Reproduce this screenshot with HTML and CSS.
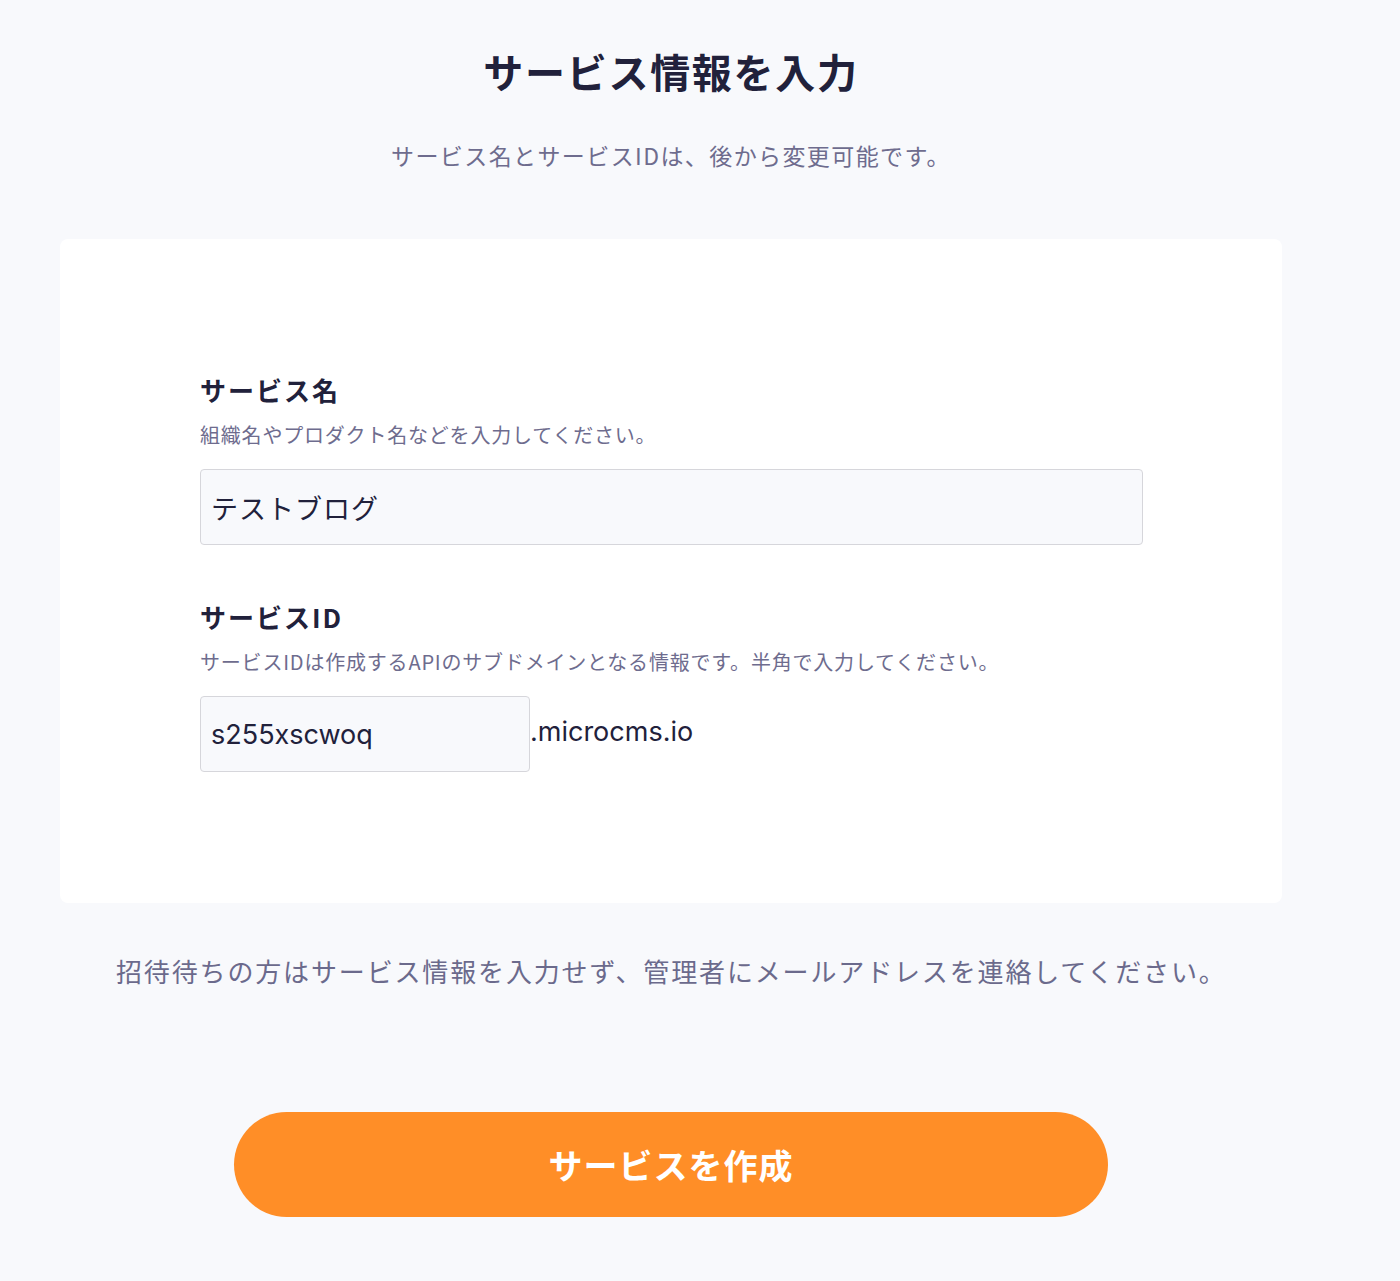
FILE: index.html
```html
<!DOCTYPE html>
<html lang="ja">
<head>
<meta charset="utf-8">
<title>サービス情報を入力</title>
<link rel="stylesheet" href="styles.css">
</head>
<body>
<main class="page">
  <h1 class="title">サービス情報を入力</h1>
  <p class="lead">サービス名とサービスIDは、後から変更可能です。</p>
  <section class="card">
    <div class="field">
      <label class="label">サービス名</label>
      <p class="desc">組織名やプロダクト名などを入力してください。</p>
      <div class="input wide">テストブログ</div>
    </div>
    <div class="field field-id">
      <label class="label">サービスID</label>
      <p class="desc">サービスIDは作成するAPIのサブドメインとなる情報です。半角で入力してください。</p>
      <div class="id-row">
        <div class="input narrow latin">s255xscwoq</div>
        <span class="suffix">.microcms.io</span>
      </div>
    </div>
  </section>
  <p class="note">招待待ちの方はサービス情報を入力せず、管理者にメールアドレスを連絡してください。</p>
  <div class="actions">
    <button class="submit">サービスを作成</button>
  </div>
</main>
</body>
</html>
```
FILE: styles.css
```css
html, body {
  margin: 0;
  padding: 0;
  background: #f8f9fc;
}
body {
  font-family: "Noto Sans CJK JP", "Noto Sans", sans-serif;
  color: #21213b;
}
.page {
  width: 1222px;
  margin-left: 60px;
  padding-top: 44px;
  padding-bottom: 64px;
}
.title {
  margin: 0;
  text-align: center;
  font-size: 40px;
  line-height: 54px;
  font-weight: 700;
  letter-spacing: 1.7px;
  color: #21213b;
}
.lead {
  margin: 42px 0 0;
  text-align: center;
  font-size: 23px;
  line-height: 30px;
  color: #6e6c8e;
  letter-spacing: 1.4px;
}
.card {
  margin-top: 69px;
  background: #ffffff;
  border-radius: 8px;
  padding: 133px 140px 131px;
}
.field-id {
  margin-top: 54px;
}
.label {
  display: block;
  font-size: 26px;
  line-height: 36px;
  font-weight: 700;
  letter-spacing: 2px;
  color: #21213b;
}
.desc {
  margin: 14px 0 0;
  font-size: 20px;
  line-height: 26px;
  color: #6e6c8e;
  letter-spacing: 0.8px;
}
.input {
  box-sizing: border-box;
  height: 76px;
  margin-top: 21px;
  background: #f8f9fc;
  border: 1.5px solid #d6d6db;
  border-radius: 4px;
  padding: 0 10px;
  display: flex;
  align-items: center;
  font-size: 27px;
  letter-spacing: 1px;
  color: #21213b;
}
.wide {
  width: 943px;
}
.id-row {
  display: flex;
  align-items: flex-start;
}
.narrow {
  width: 330px;
  padding: 0 10px;
}
.latin {
  font-family: "Inter", "Liberation Sans", Arial, sans-serif;
  font-size: 27px;
  letter-spacing: 0;
}
.suffix {
  font-family: "Inter", "Liberation Sans", Arial, sans-serif;
  font-size: 27px;
  margin-top: 40px;
  line-height: 34px;
  color: #21213b;
}
.note {
  margin: 50px 0 0 56px;
  font-size: 26px;
  line-height: 36px;
  color: #6b6a8c;
  letter-spacing: 1.85px;
}
.actions {
  margin-top: 123px;
  display: flex;
  justify-content: center;
}
.submit {
  width: 874px;
  height: 105px;
  border: none;
  border-radius: 53px;
  background: #ff8e27;
  color: #ffffff;
  font-family: "Noto Sans CJK JP", "Noto Sans", sans-serif;
  font-size: 34px;
  font-weight: 700;
  letter-spacing: 1px;
  cursor: pointer;
}
```
